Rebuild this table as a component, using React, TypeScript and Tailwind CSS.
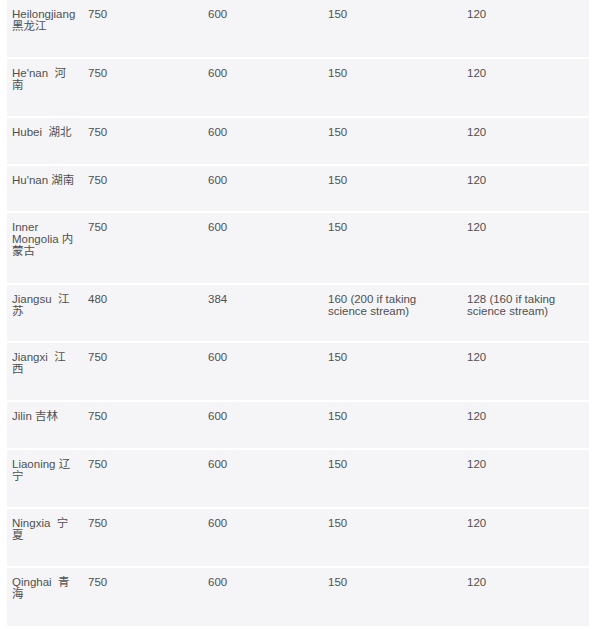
import React from "react"

type Row = {
    name: React.ReactNode
    h: string
    cells: React.ReactNode[]
}

const rows: Row[] = [
    { name: <>Heilongjiang<br />黑龙江</>, h: "h-[57px]", cells: ["750", "600", "150", "120"] },
    { name: <>He&apos;nan&nbsp; 河<br />南</>, h: "h-[57px]", cells: ["750", "600", "150", "120"] },
    { name: <>Hubei&nbsp; 湖北</>, h: "h-[46px]", cells: ["750", "600", "150", "120"] },
    { name: <>Hu&apos;nan 湖南</>, h: "h-[45px]", cells: ["750", "600", "150", "120"] },
    { name: <>Inner<br />Mongolia 内<br />蒙古</>, h: "h-[70px]", cells: ["750", "600", "150", "120"] },
    {
        name: <>Jiangsu&nbsp; 江<br />苏</>,
        h: "h-[56px]",
        cells: [
            "480",
            "384",
            <>160 (200 if taking<br />science stream)</>,
            <>128 (160 if taking<br />science stream)</>,
        ],
    },
    { name: <>Jiangxi&nbsp; 江<br />西</>, h: "h-[57px]", cells: ["750", "600", "150", "120"] },
    { name: <>Jilin 吉林</>, h: "h-[46px]", cells: ["750", "600", "150", "120"] },
    { name: <>Liaoning 辽<br />宁</>, h: "h-[57px]", cells: ["750", "600", "150", "120"] },
    { name: <>Ningxia&nbsp; 宁<br />夏</>, h: "h-[57px]", cells: ["750", "600", "150", "120"] },
    { name: <>Qinghai&nbsp; 青<br />海</>, h: "h-[58px]", cells: ["750", "600", "150", "120"] },
]

export default function App() {
    return (
        <div className="w-[600px] h-[629px] bg-white pl-[7px] overflow-hidden font-['Liberation_Sans','Noto_Sans_CJK_SC',sans-serif] text-[11.5px] leading-[12px] text-[#505050]">
            <div className="w-[582px] flex flex-col gap-[2px]">
                {rows.map((row, i) => (
                    <div
                        key={i}
                        className={`grid grid-cols-[76px_120px_120px_139px_127px] bg-[#f5f5f7] ${row.h}`}
                    >
                        <div className="pl-[5px] pt-[8px] whitespace-nowrap">{row.name}</div>
                        {row.cells.map((c, j) => (
                            <div key={j} className="pl-[5px] pt-[8px] whitespace-nowrap">
                                {c}
                            </div>
                        ))}
                    </div>
                ))}
            </div>
        </div>
    )
}
